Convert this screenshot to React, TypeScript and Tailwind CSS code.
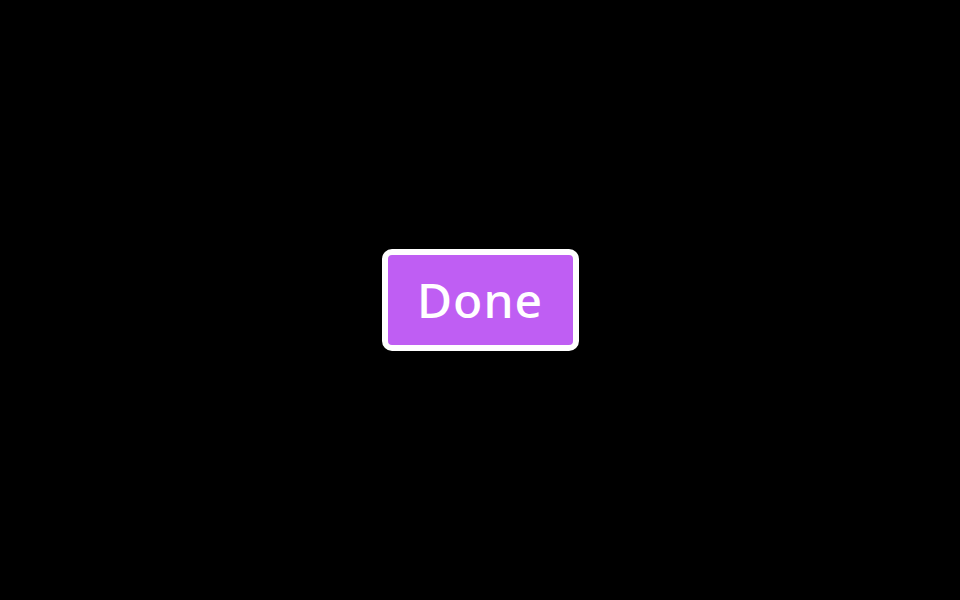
export default function App() {
  return (
    <div className="flex h-screen w-full items-center justify-center bg-black">
      <button className="flex h-[102px] w-[197px] items-center justify-center rounded-[10px] border-[6px] border-white bg-[#bf5ef3] font-['Noto_Sans',sans-serif] text-[48px] font-medium leading-none tracking-[0.02em] text-white">
        Done
      </button>
    </div>
  );
}
